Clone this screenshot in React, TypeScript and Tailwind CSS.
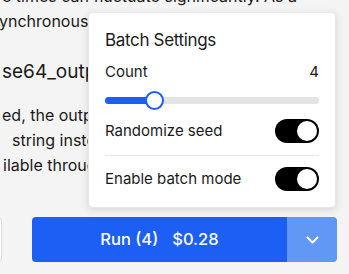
import React from 'react';

const Toggle = () => (
  <div className="w-[44px] h-[24px] rounded-full bg-black flex items-center justify-end px-[2px]">
    <div className="w-[20px] h-[20px] rounded-full bg-white" />
  </div>
);

export default function App() {
  return (
    <div
      className="relative w-[349px] h-[274px] overflow-hidden bg-[#f4f4f4] text-[#1a1a1a]"
      style={{ fontFamily: 'Inter, "Liberation Sans", sans-serif' }}
    >
      {/* Docs text behind the popover */}
      <div className="text-[16px] leading-[25px] whitespace-nowrap">
        <div className="-mt-[16px] pl-[2px]">e times can fluctuate significantly. As a</div>
        <div className="-ml-[1px]">ynchronous requests are recommended.</div>
        <div className="mt-[23px] pl-[2px] text-[19px] leading-[30px]">se64_output</div>
        <div className="mt-[16px] pl-[2px]">ed, the output will be returned</div>
        <div className="pl-[12px]">string instead of a URL.</div>
        <div className="pl-[3px]">ilable through the API.</div>
      </div>

      {/* Action row */}
      <div className="absolute left-0 top-[217px] flex w-full">
        <div className="-ml-[40px] w-[42px] h-[45px] rounded-[4px] bg-white border border-[#dcdcdc]" />
        <div className="ml-[30px] flex h-[45px] w-[305px] rounded-[4px] overflow-hidden text-white">
          <div className="flex-1 bg-[#1d5ef4] flex items-center justify-center gap-[14px] text-[16.5px] font-medium">
            <span>Run (4)</span>
            <span>$0.28</span>
          </div>
          <div className="w-[50px] bg-[#6197f5] flex items-center justify-center">
            <svg width="13" height="8" viewBox="0 0 13 8" fill="none">
              <path d="M1.5 1.5L6.5 6.5L11.5 1.5" stroke="white" strokeWidth="2" strokeLinecap="round" strokeLinejoin="round" />
            </svg>
          </div>
        </div>
      </div>

      {/* Batch settings popover */}
      <div className="absolute left-[88px] top-[12px] w-[248px] bg-white rounded-[4px] border border-[#e6e8ec] shadow-[0_2px_8px_rgba(0,0,0,0.12)] p-4 pt-[15px]">
        <div className="text-[17px] leading-[24px] tracking-[-0.02em]">Batch Settings</div>
        <div className="mt-[10px] flex items-center justify-between text-[15px] leading-[20px]">
          <span>Count</span>
          <span>4</span>
        </div>
        <div className="mt-[8px] relative h-[20px] flex items-center">
          <div className="w-full h-[7px] rounded-full bg-[#e4e4e4]" />
          <div className="absolute left-0 w-[49px] h-[7px] rounded-full bg-[#1d5ef4]" />
          <div className="absolute left-[40px] w-[19px] h-[19px] rounded-full bg-white border-2 border-[#1d5ef4]" />
        </div>
        <div className="mt-[9px] flex items-center justify-between text-[15px]">
          <span>Randomize seed</span>
          <Toggle />
        </div>
        <div className="mt-[12px] h-px bg-[#e6e6e6]" />
        <div className="mt-[11px] flex items-center justify-between text-[15px]">
          <span>Enable batch mode</span>
          <Toggle />
        </div>
      </div>
    </div>
  );
}
